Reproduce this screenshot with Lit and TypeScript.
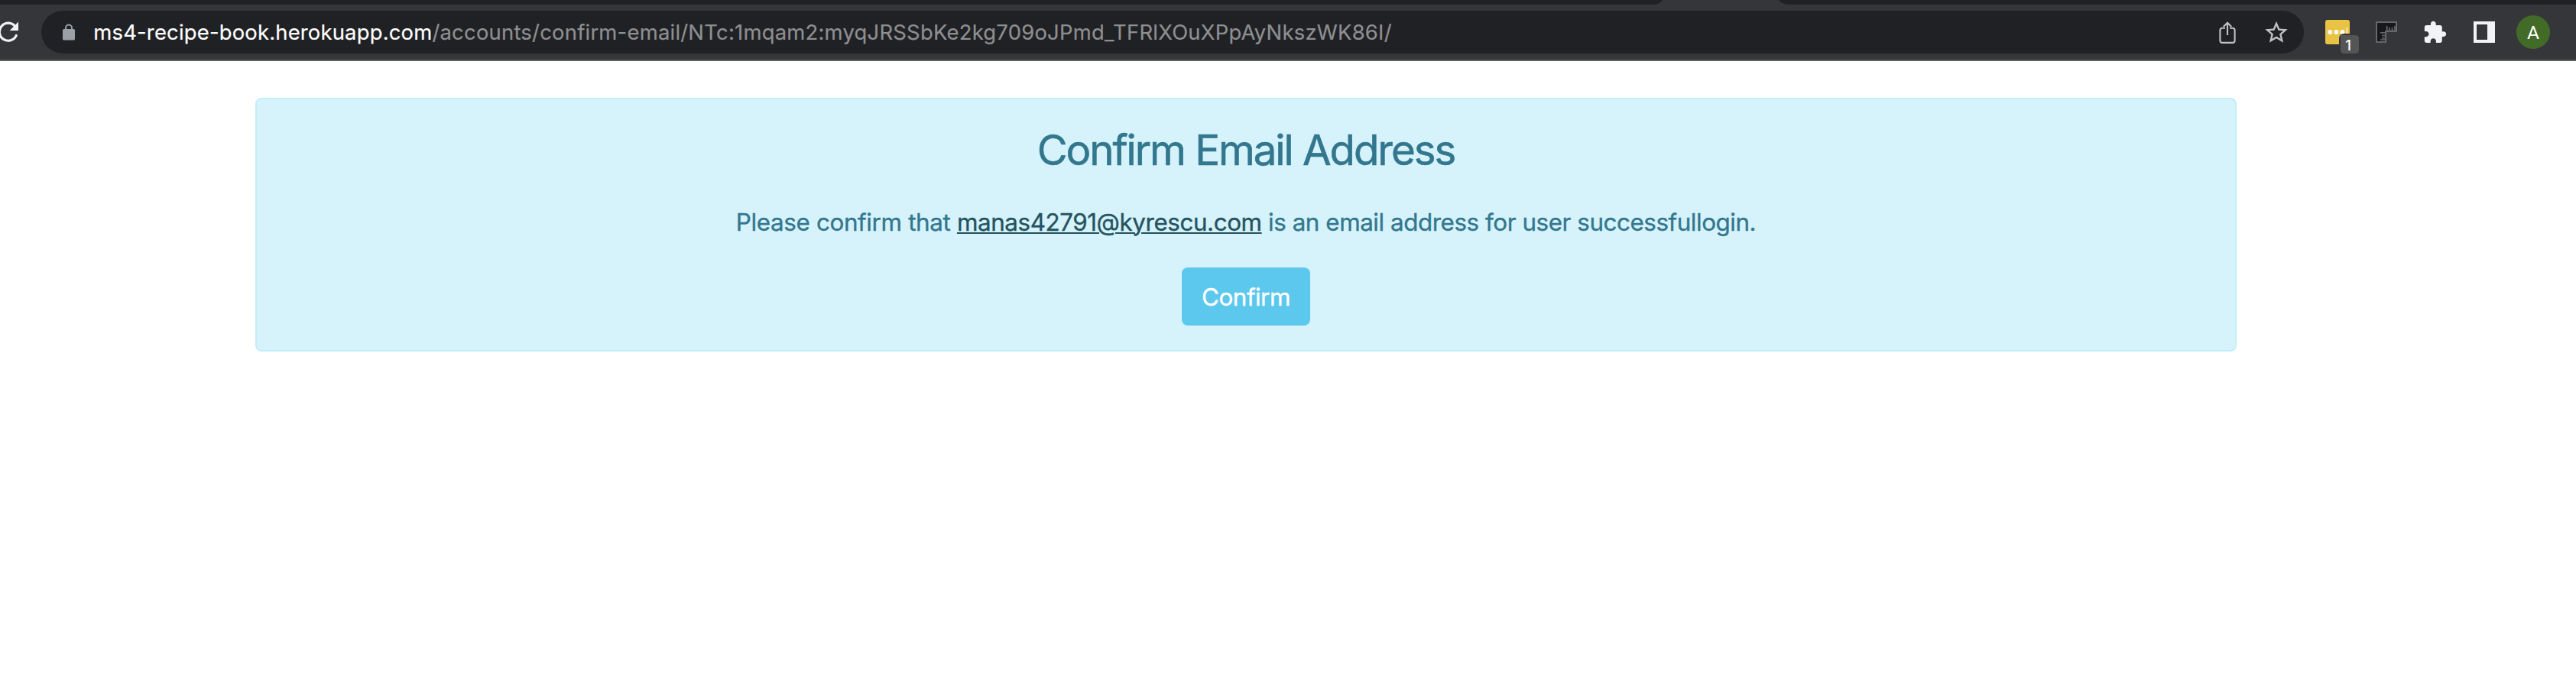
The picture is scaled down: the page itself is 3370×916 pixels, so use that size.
import { LitElement, html, css } from "lit";
import { customElement } from "lit/decorators.js";

@customElement("browser-toolbar")
class BrowserToolbar extends LitElement {
  static styles = css`
    :host { display: block; font-family: Inter, "Liberation Sans", sans-serif; }
    svg { display: block; flex: none; overflow: visible; }
    .strip { height: 6px; background: #202124; padding-left: 2164px; }
    .bar {
      box-sizing: border-box; height: 74px; background: #35363a;
      border-bottom: 2px solid #5f6064; display: flex; align-items: center;
    }
    .pill {
      display: flex; align-items: center; width: 2960px; height: 56px; box-sizing: border-box;
      margin-left: 28px; padding: 0 19px 0 28px; border-radius: 28px; background: #202124;
    }
    .url {
      flex: 1; margin-left: 24.3px; font-size: 27.4px; line-height: 40px;
      letter-spacing: 0.24px; white-space: nowrap; color: #8e8f91; -webkit-text-stroke: 0.2px #8e8f91;
    }
    .host { color: #fff; letter-spacing: 0.2px; -webkit-text-stroke: 0.2px #fff; }
    .star { margin-left: 33px; }
    .ext { position: relative; margin-left: 28px; width: 32px; height: 32px; }
    .badge {
      position: absolute; left: 18px; top: 18px; width: 24px; height: 24px;
      border: 2px solid #35363a; border-radius: 6px; background: #555; background-clip: padding-box;
      color: #fff; font-size: 18.5px; line-height: 27px; text-align: center; text-indent: -4px; font-weight: 500;
    }
    .ruler { margin-left: 34px; }
    .puzzle { margin-left: 33px; }
    .panel { margin-left: 33px; }
    .avatar {
      margin-left: 28px; width: 44px; height: 44px; border-radius: 50%; background: #436b28;
      color: #fff; font: 24.5px/45px Roboto, sans-serif; text-align: center;
    }
  `;
  render() {
    return html`
      <div class="strip">
        <svg width="176" height="6"><path fill="#35363a" d="M0 6C5 5.600 8.500 3.500 11 0H163C165.500 3.500 169 5.600 176 6Z" /></svg>
      </div>
      <div class="bar">
        <svg width="26" height="32" viewBox="0 26 26 32">
          <path d="M19.500 34.200A11.500 11.500 0 1 0 21.300 46.400" fill="none" stroke="#f1f3f4" stroke-width="3.200" stroke-linecap="round" />
          <path d="M24 28.600V40H12.700Z" fill="#f1f3f4" />
        </svg>
        <div class="pill">
          <svg width="16" height="22" viewBox="0 0 16 22">
            <rect y="7" width="16" height="14.500" rx="1.600" fill="#9aa0a6" />
            <path d="M4 8V5.500a4 4 0 0 1 8 0V8" fill="none" stroke="#9aa0a6" stroke-width="2" />
          </svg>
          <div class="url"><span class="host">ms4-recipe-book.herokuapp.com</span>/accounts/confirm-email/NTc:1mqam2:myqJRSSbKe2kg709oJPmd_TFRlXOuXPpAyNkszWK86I/</div>
          <svg width="28" height="32" viewBox="2900 26 28 32" fill="none" stroke="#c0c1c2" stroke-width="2.100">
            <path d="M2911 36.800H2907.300Q2904.400 36.800 2904.400 39.700V53Q2904.400 55.900 2907.300 55.900H2920.700Q2923.600 55.900 2923.600 53V39.700Q2923.600 36.800 2920.700 36.800H2917" />
            <path d="M2914 46V30M2908.700 35L2914 29.700L2919.300 35" />
          </svg>
          <svg class="star" width="34" height="34" viewBox="0.470 0.200 23.060 23.060" fill="#c0c1c2">
            <path d="M22 9.240l-7.190-.62L12 2 9.190 8.630 2 9.240l5.460 4.730L5.820 21 12 17.270 18.180 21l-1.630-7.030L22 9.240zM12 15.400l-3.760 2.270 1-4.280-3.320-2.880 4.380-.38L12 6.100l1.710 4.040 4.380.38-3.320 2.880 1 4.280L12 15.400z" />
          </svg>
        </div>
        <div class="ext">
          <svg width="32" height="32">
            <rect width="32" height="32" rx="3" fill="#e8c344" />
            <g fill="#fff"><circle cx="6.200" cy="16" r="3" /><circle cx="14.400" cy="16" r="3" /><circle cx="22.400" cy="16" r="3" /></g>
            <path d="M28.300 10V22" stroke="#f7e9bb" stroke-width="1.700" />
          </svg>
          <div class="badge">1</div>
        </div>
        <svg class="ruler" width="28" height="28">
          <path d="M1 1H27V13H13V27H1Z" fill="#17181b" stroke="#66676a" stroke-width="2" />
          <path d="M14.700 6V12M18 8V12M21.500 8V12M25 6V12M14 12.500H27M6 14.800H13M8 18.500H13M8 22H13M6 24H13" stroke="#66676a" stroke-width="1.700" fill="none" />
        </svg>
        <svg class="puzzle" width="34" height="34" viewBox="-0.080 -0.950 25.150 25.150" fill="#f1f3f4">
          <path d="M20.500 11H19V7c0-1.100-.9-2-2-2h-4V3.500C13 2.120 11.880 1 10.500 1S8 2.120 8 3.500V5H4c-1.100 0-1.990.9-1.990 2v3.800H3.500c1.490 0 2.700 1.210 2.700 2.700s-1.210 2.700-2.700 2.700H2V20c0 1.100.9 2 2 2h3.800v-1.500c0-1.490 1.210-2.700 2.700-2.700 1.490 0 2.700 1.210 2.700 2.700V22H17c1.100 0 2-.9 2-2v-4h1.500c1.380 0 2.500-1.120 2.500-2.500S21.880 11 20.500 11z" />
        </svg>
        <svg class="panel" width="28" height="28"><path fill="#f1f3f4" fill-rule="evenodd" d="M0 0H28V28H0ZM4 4V24H18V4Z" /></svg>
        <div class="avatar">A</div>
      </div>
    `;
  }
}

@customElement("confirm-card")
class ConfirmCard extends LitElement {
  static styles = css`
    :host {
      display: flex; flex-direction: column; align-items: center; box-sizing: border-box;
      width: 2592px; height: 332px; padding: 32px; border: 2px solid #c2eefa; border-radius: 8px;
      background: #d6f3fb; color: #33778e; font-family: Inter, "Liberation Sans", sans-serif;
      -webkit-text-stroke: 0.35px currentColor;
    }
    h2 {
      margin: 0; font-size: 54.6px; line-height: 68px; font-weight: 400; letter-spacing: -2.05px;
      white-space: nowrap; -webkit-text-stroke-width: 0.6px;
    }
    p { margin: 37px 0 0; font-size: 31.4px; line-height: 48px; letter-spacing: -0.45px; white-space: nowrap; }
    a {
      color: #25535f; letter-spacing: -0.43px; text-decoration: underline;
      text-decoration-thickness: 2px; text-underline-offset: 2px;
    }
    .lead { letter-spacing: -0.36px; }
    button {
      margin-top: 35px; width: 168px; height: 76px; padding: 1px 0 0; border: 0; border-radius: 8px;
      background: #5dc8ed; color: #fff; font: 31.4px/48px Inter, sans-serif; letter-spacing: -0.5px;
      -webkit-text-stroke: 0.35px #fff;
    }
  `;
  render() {
    return html`
      <h2>Confirm Email Address</h2>
      <p><span class="lead">Please confirm that </span><a>manas42791@kyrescu.com</a> is an email address for user successfullogin.</p>
      <button>Confirm</button>
    `;
  }
}

@customElement("app-root")
class AppRoot extends LitElement {
  static styles = css`
    :host { display: block; height: 916px; background: #fff; overflow: hidden; }
    .page { padding: 48px 0 0 334px; }
  `;
  render() {
    return html`
      <browser-toolbar></browser-toolbar>
      <div class="page"><confirm-card></confirm-card></div>
    `;
  }
}
